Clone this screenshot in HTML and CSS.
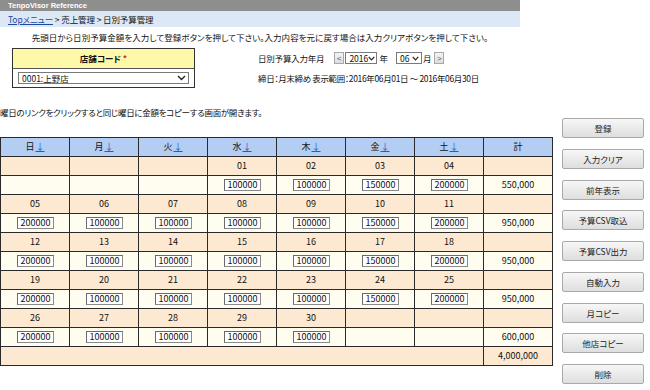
FILE: index.html
```html
<!DOCTYPE html>
<html lang="ja">
<head>
<meta charset="utf-8">
<title>日別予算管理</title>
<link rel="stylesheet" href="styles.css">
</head>
<body>
<div class="top">
  <div class="titlebar">TenpoVisor Reference</div>
  <div class="crumb"><a href="#" class="link">Topメニュー</a> &gt; 売上管理 &gt; 日別予算管理</div>
  <p class="instr">先頭日から日別予算金額を入力して登録ボタンを押して下さい。入力内容を元に戻す場合は入力クリアボタンを押して下さい。</p>
  <div class="formrow">
    <div class="storebox">
      <div class="storehead">店舗コード <span class="req">*</span></div>
      <div class="storebody">
        <div class="sel storesel"><span>0001:上野店</span><svg class="chev" width="9" height="6" viewBox="0 0 9 6"><path d="M1 1 L4.5 4.5 L8 1" fill="none" stroke="#222" stroke-width="1.4"/></svg></div>
      </div>
    </div>
    <div class="period">
      <div class="ymrow">
        <span class="lbl">日別予算入力年月</span>
        <span class="navbtn">&lt;</span>
        <span class="sel ysel"><span>2016</span><svg class="chev" width="7" height="5" viewBox="0 0 7 5"><path d="M0.7 0.8 L3.5 3.8 L6.3 0.8" fill="none" stroke="#222" stroke-width="1.2"/></svg></span>
        <span class="unit">年</span>
        <span class="sel msel"><span>06</span><svg class="chev" width="7" height="5" viewBox="0 0 7 5"><path d="M0.7 0.8 L3.5 3.8 L6.3 0.8" fill="none" stroke="#222" stroke-width="1.2"/></svg></span>
        <span class="unit unit2">月</span>
        <span class="navbtn">&gt;</span>
      </div>
      <div class="range">締日：月末締め 表示範囲：2016年06月01日 ～ 2016年06月30日</div>
    </div>
  </div>
</div>
<div class="main">
  <div class="left">
    <p class="notice">曜日のリンクをクリックすると同じ曜日に金額をコピーする画面が開きます。</p>
    <table class="cal">
      <colgroup><col><col><col><col><col><col><col><col></colgroup>
      <tr class="hd">
        <th>日<a href="#" class="arr">↓</a></th><th>月<a href="#" class="arr">↓</a></th><th>火<a href="#" class="arr">↓</a></th><th>水<a href="#" class="arr">↓</a></th><th>木<a href="#" class="arr">↓</a></th><th>金<a href="#" class="arr">↓</a></th><th>土<a href="#" class="arr">↓</a></th><th>計</th>
      </tr>
      <tr class="dt"><td></td><td></td><td></td><td>01</td><td>02</td><td>03</td><td>04</td><td></td></tr>
      <tr class="in"><td></td><td></td><td></td><td><span class="inp">100000</span></td><td><span class="inp">100000</span></td><td><span class="inp">150000</span></td><td><span class="inp">200000</span></td><td>550,000</td></tr>
      <tr class="dt"><td>05</td><td>06</td><td>07</td><td>08</td><td>09</td><td>10</td><td>11</td><td></td></tr>
      <tr class="in"><td><span class="inp">200000</span></td><td><span class="inp">100000</span></td><td><span class="inp">100000</span></td><td><span class="inp">100000</span></td><td><span class="inp">100000</span></td><td><span class="inp">150000</span></td><td><span class="inp">200000</span></td><td>950,000</td></tr>
      <tr class="dt"><td>12</td><td>13</td><td>14</td><td>15</td><td>16</td><td>17</td><td>18</td><td></td></tr>
      <tr class="in"><td><span class="inp">200000</span></td><td><span class="inp">100000</span></td><td><span class="inp">100000</span></td><td><span class="inp">100000</span></td><td><span class="inp">100000</span></td><td><span class="inp">150000</span></td><td><span class="inp">200000</span></td><td>950,000</td></tr>
      <tr class="dt"><td>19</td><td>20</td><td>21</td><td>22</td><td>23</td><td>24</td><td>25</td><td></td></tr>
      <tr class="in"><td><span class="inp">200000</span></td><td><span class="inp">100000</span></td><td><span class="inp">100000</span></td><td><span class="inp">100000</span></td><td><span class="inp">100000</span></td><td><span class="inp">150000</span></td><td><span class="inp">200000</span></td><td>950,000</td></tr>
      <tr class="dt"><td>26</td><td>27</td><td>28</td><td>29</td><td>30</td><td></td><td></td><td></td></tr>
      <tr class="in"><td><span class="inp">200000</span></td><td><span class="inp">100000</span></td><td><span class="inp">100000</span></td><td><span class="inp">100000</span></td><td><span class="inp">100000</span></td><td></td><td></td><td>600,000</td></tr>
      <tr class="dt tot"><td colspan="7"></td><td>4,000,000</td></tr>
    </table>
  </div>
  <div class="btns">
    <button class="btn">登録</button>
    <button class="btn">入力クリア</button>
    <button class="btn">前年表示</button>
    <button class="btn">予算CSV取込</button>
    <button class="btn">予算CSV出力</button>
    <button class="btn">自動入力</button>
    <button class="btn">月コピー</button>
    <button class="btn">他店コピー</button>
    <button class="btn">削除</button>
  </div>
</div>
</body>
</html>
```
FILE: styles.css
```css
* { box-sizing: border-box; }
html, body { margin: 0; padding: 0; background: #fff; }
body {
  font-family: "Noto Sans CJK JP", "Noto Sans", sans-serif;
  font-size: 8.5px;
  color: #111;
  font-feature-settings: "palt";
}
.top { width: 520px; }
.titlebar {
  height: 11px;
  background: #8e8e8e;
  color: #fff;
  font-family: "Liberation Sans", Arial, sans-serif;
  font-weight: bold;
  font-size: 7.5px;
  line-height: 11px;
  padding-left: 8px;
}
.crumb {
  height: 16px;
  background: #dce8f6;
  line-height: 16px;
  padding-left: 8px;
  letter-spacing: -0.1px;
}
.link { color: #1a4aa0; text-decoration: underline; }
.instr {
  margin: 4px 0 0 0;
  height: 12px;
  line-height: 12px;
  text-align: center;
  letter-spacing: 0.05px;
}
.formrow {
  display: flex;
  margin-top: 5px;
}
.storebox {
  margin-left: 12px;
  width: 183px;
  height: 40px;
  border: 1px solid #333;
}
.storehead {
  height: 20px;
  background: #fdf9a9;
  border-bottom: 1px solid #555;
  text-align: center;
  line-height: 19px;
  font-weight: bold;
}
.req { color: #d2231b; }
.storebody { padding: 3px 5px 0 5px; }
.sel {
  display: inline-flex;
  align-items: center;
  justify-content: space-between;
  height: 12px;
  border: 1px solid #7a7a7a;
  background: #fff;
  padding: 0 2px 0 3px;
  line-height: 10px;
}
.storesel { width: 171px; display: flex; }
.chev { display: block; flex: none; }
.period {
  margin-left: 63px;
  padding-top: 4px;
}
.ymrow {
  display: flex;
  align-items: center;
  height: 12px;
}
.lbl { margin-right: 10px; letter-spacing: -0.2px; }
.navbtn {
  display: inline-flex;
  align-items: center;
  justify-content: center;
  width: 10px;
  height: 12px;
  border: 1px solid #a8a8a8;
  background: linear-gradient(#f4f4f4, #dedede);
  color: #555;
  font-family: "Liberation Sans", Arial, sans-serif;
  font-size: 8px;
  margin-right: 1px;
}
.ysel { width: 32px; }
.msel { width: 26px; margin-left: 8px; }
.unit { margin-left: 2px; margin-right: 0; }
.unit2 { margin-right: 3px; margin-left: 1px; }
.range {
  margin-top: 8px;
  height: 12px;
  line-height: 12px;
  letter-spacing: -0.35px;
}
.main {
  display: flex;
  margin-top: 18px;
}
.left { width: 553px; }
.notice {
  margin: 0 0 19px 0;
  height: 12px;
  line-height: 12px;
  letter-spacing: -0.3px;
}
.cal {
  border-collapse: collapse;
  table-layout: fixed;
  width: 553px;
}
.cal col { width: 69px; }
.cal th, .cal td {
  border: 1px solid #2a2a2a;
  padding: 0;
  text-align: center;
  height: 19px;
  font-size: 9px;
  font-weight: normal;
  line-height: 12px;
}
.cal tr.hd th { background: #b4cdf3; }
.arr { color: #1f5fc0; text-decoration: underline; margin-left: 1px; }
.cal tr.dt td { background: #fde9d2; }
.cal tr.in td { background: #fffdf0; }
.inp {
  display: inline-block;
  width: 37px;
  height: 12px;
  line-height: 10px;
  border: 1px solid #8a8a8a;
  border-top-color: #6a6a6a;
  border-left-color: #6a6a6a;
  background: #fff;
  text-align: right;
  padding-right: 2px;
  vertical-align: middle;
}
.btns {
  margin-left: 9px;
  padding-top: 12px;
  display: flex;
  flex-direction: column;
  gap: 10.75px;
}
.btn {
  width: 82px;
  height: 20px;
  border: 1px solid #a9a9a9;
  border-radius: 2px;
  background: linear-gradient(#f7f7f7, #dedede);
  font-family: "Noto Sans CJK JP", sans-serif;
  font-feature-settings: "palt";
  font-size: 8.5px;
  color: #222;
  padding: 0;
}
```
